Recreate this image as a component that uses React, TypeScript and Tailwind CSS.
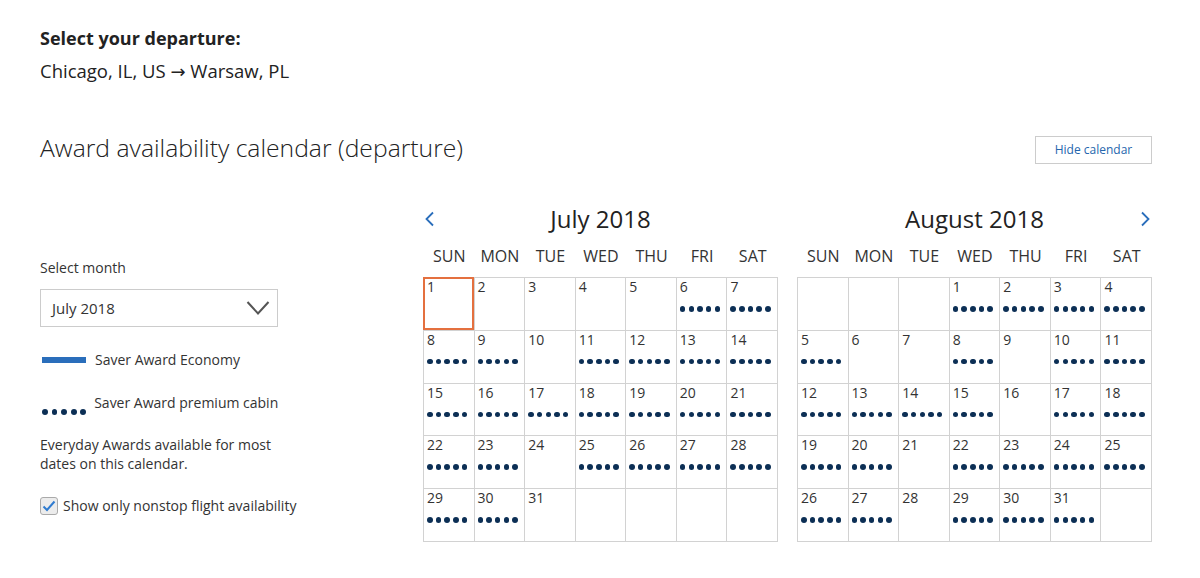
import React from 'react';

type Day = { n?: number; dots?: boolean; selected?: boolean };

const julyAvail = [6, 7, 8, 9, 11, 12, 13, 14, 15, 16, 17, 18, 19, 20, 21, 22, 23, 25, 26, 27, 28, 29, 30];
const augAvail = [1, 2, 3, 4, 5, 8, 10, 11, 12, 13, 14, 15, 17, 18, 19, 20, 22, 23, 24, 25, 26, 27, 29, 30, 31];

function buildMonth(offset: number, days: number, avail: number[], selected?: number): Day[] {
  const cells: Day[] = [];
  for (let i = 0; i < offset; i++) cells.push({});
  for (let d = 1; d <= days; d++) {
    cells.push({ n: d, dots: avail.includes(d), selected: d === selected });
  }
  while (cells.length < 35) cells.push({});
  return cells;
}

const weekdays = ['SUN', 'MON', 'TUE', 'WED', 'THU', 'FRI', 'SAT'];

function Dots({ large }: { large?: boolean }) {
  return (
    <div className={large ? 'flex gap-[3.8px]' : 'flex gap-[3.2px]'}>
      {[0, 1, 2, 3, 4].map((i) => (
        <span
          key={i}
          className={large ? 'block w-[5.8px] h-[5.8px] rounded-full bg-[#0c2f55]' : 'block w-[5.5px] h-[5.5px] rounded-full bg-[#0c2f55]'}
        />
      ))}
    </div>
  );
}

function Chevron({ dir }: { dir: 'left' | 'right' }) {
  return (
    <svg width="12" height="16" viewBox="0 0 12 16" fill="none">
      <polyline
        points={dir === 'left' ? '9,1.5 2.5,8 9,14.5' : '3,1.5 9.5,8 3,14.5'}
        stroke="#2a6ebb"
        strokeWidth="1.8"
      />
    </svg>
  );
}

function Month({ title, cells, nav }: { title: string; cells: Day[]; nav: 'left' | 'right' }) {
  return (
    <div className="w-[355px]">
      {/* Title row */}
      <div className="flex items-center justify-between h-[32px] px-[1px]">
        {nav === 'left' ? <Chevron dir="left" /> : <span className="w-[12px]" />}
        <div className="text-[24px] leading-[32px] text-[#222]">{title}</div>
        {nav === 'right' ? <Chevron dir="right" /> : <span className="w-[12px]" />}
      </div>

      {/* Weekdays */}
      <div className="grid grid-cols-7 mt-[9px] pl-[1px]">
        {weekdays.map((w) => (
          <div key={w} className="text-center text-[16px] leading-[24px] text-[#333]">
            {w}
          </div>
        ))}
      </div>

      {/* Days */}
      <div className="grid grid-cols-7 mt-[9px] border-l border-t border-[#d2d2d2]">
        {cells.map((c, i) => (
          <div key={i} className="relative h-[52.8px] border-r border-b border-[#d2d2d2] pl-[3px]">
            {c.n && <div className="text-[14px] leading-[18px] text-[#333]">{c.n}</div>}
            {c.dots && (
              <div className="mt-[10px]">
                <Dots />
              </div>
            )}
            {c.selected && <div className="absolute -left-px -top-px w-[calc(100%+1px)] h-[calc(100%+1px)] border-2 border-[#e4703f]" />}
          </div>
        ))}
      </div>
    </div>
  );
}

export default function App() {
  const july = buildMonth(0, 31, julyAvail, 1);
  const august = buildMonth(3, 31, augAvail);

  return (
    <div className="w-[1200px] h-[578px] overflow-hidden bg-white font-['Open_Sans',sans-serif] text-[#333] pl-[40px] pr-[48px] pt-[26px]">
      <div className="text-[18px] leading-[24px] font-bold text-[#222]">Select your departure:</div>
      <div className="mt-[9px] h-[24px] text-[18.5px] leading-[24px] text-[#222]">
        Chicago, IL, US <span className="font-['DejaVu_Sans',sans-serif] text-[18px] leading-none">→</span> Warsaw, PL
      </div>

      {/* Heading */}
      <div className="flex items-start justify-between mt-[49px]">
        <h1 className="text-[24.7px] leading-[32px] font-light text-[#222]">Award availability calendar (departure)</h1>
        <button className="mt-[4px] w-[117px] h-[28px] border border-[#ccc] bg-white text-[12px] text-[#2466ad]">
          Hide calendar
        </button>
      </div>

      <div className="flex mt-[39px]">
        {/* Left panel */}
        <div className="w-[384px] pt-[55px]">
          <div className="text-[14px] leading-[20px]">Select month</div>
          <div className="mt-[11px] w-[238px] h-[38px] border border-[#ccc] flex items-center justify-between pl-[11px] pr-[7px]">
            <span className="text-[15px] text-[#333]">July 2018</span>
            <svg width="24" height="16" viewBox="0 0 24 16" fill="none">
              <polyline points="1.5,2 12,13.5 22.5,2" stroke="#555" strokeWidth="2" />
            </svg>
          </div>

          <div className="flex items-center h-[20px] mt-[23px]">
            <span className="block ml-[2px] w-[44px] h-[6px] bg-[#2a6ebb]" />
            <span className="ml-[9px] text-[14px] leading-[20px]">Saver Award Economy</span>
          </div>

          <div className="flex items-start h-[20px] mt-[23px]">
            <div className="ml-[2px] mt-[16px]">
              <Dots large />
            </div>
            <span className="ml-[8px] text-[14px] leading-[20px]">Saver Award premium cabin</span>
          </div>

          <p className="mt-[22px] text-[14px] leading-[19px]">
            Everyday Awards available for most
            <br />
            dates on this calendar.
          </p>

          <label className="flex items-center h-[20px] mt-[23px]">
            <span className="flex items-center justify-center w-[18px] h-[18px] border border-[#aaa] rounded-[3px] bg-[#ececec]">
              <svg width="14" height="12" viewBox="0 0 14 12" fill="none">
                <polyline points="1.5,6.5 5,10 12.5,1.5" stroke="#2f7bd0" strokeWidth="2" />
              </svg>
            </span>
            <span className="ml-[5px] text-[14px] leading-[20px]">Show only nonstop flight availability</span>
          </label>
        </div>

        {/* Calendars */}
        <div className="flex gap-[19px]">
          <Month title="July 2018" cells={july} nav="left" />
          <Month title="August 2018" cells={august} nav="right" />
        </div>
      </div>
    </div>
  );
}
